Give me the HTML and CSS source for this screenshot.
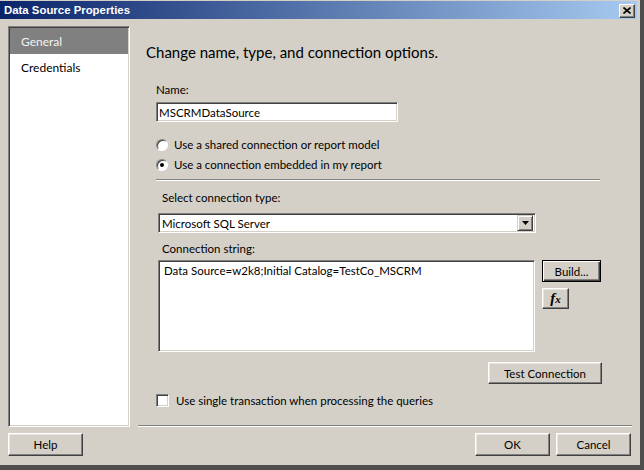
FILE: index.html
```html
<!DOCTYPE html>
<html lang="en">
<head>
  <meta charset="UTF-8" />
  <meta name="viewport" content="width=device-width, initial-scale=1.0"/>
  <title>Data Source Properties</title>
  <link rel="stylesheet" href="styles.css">
</head>
<body>

  <div class="ventana">
    <div class="titulo">
      <span>Data Source Properties</span>
      <span class="cerrar">
        <svg width="8" height="7" viewBox="0 0 8 7"><path d="M0.5 0.5 L7.5 6.5 M7.5 0.5 L0.5 6.5" stroke="#000" stroke-width="1.6"/></svg>
      </span>
    </div>

    <div class="cuerpo">
      <!-- Menu lateral -->
      <ul class="menu">
        <li class="activo">General</li>
        <li>Credentials</li>
      </ul>

      <!-- Panel principal -->
      <section class="panel">
        <h1>Change name, type, and connection options.</h1>
        <div class="form">
          <div class="etiqueta">Name:</div>
          <input class="hundido nombre" type="text" value="MSCRMDataSource">

          <div class="opciones">
            <div class="opcion"><span class="radio"></span>Use a shared connection or report model</div>
            <div class="opcion"><span class="radio marcado"></span>Use a connection embedded in my report</div>
          </div>
          <div class="linea"></div>

          <div class="conexion">
            <div class="etiqueta sel">Select connection type:</div>
            <div class="hundido combo">
              <span>Microsoft SQL Server</span>
              <span class="flecha">
                <svg width="7" height="4" viewBox="0 0 7 4"><path d="M0 0h7l-3.5 4z" fill="#000"/></svg>
              </span>
            </div>
            <div class="etiqueta con">Connection string:</div>
            <div class="fila">
              <textarea class="hundido cadena">Data Source=w2k8;Initial Catalog=TestCo_MSCRM</textarea>
              <div class="botones">
                <button class="boton defecto">Build...</button>
                <button class="boton fx"><i>f<small>x</small></i></button>
              </div>
            </div>
          </div>

          <button class="boton probar">Test Connection</button>
          <div class="check"><span class="caja"></span>Use single transaction when processing the queries</div>
        </div>
      </section>
    </div>

    <div class="pie">
      <button class="boton">Help</button>
      <span class="espacio"></span>
      <button class="boton">OK</button>
      <button class="boton">Cancel</button>
    </div>
  </div>

</body>
</html>
```

FILE: styles.css
```css
/* --------- Base --------- */
body { margin:0; background:#fff; font-family: Lato, "Liberation Sans", sans-serif; font-size:11.5px; color:#000 }
.ventana {
  width:640px; height:465px; background:#d4d0c8;
  border-right:4px solid #4e4e4e; border-bottom:5px solid #4e4e4e;
  display:flex; flex-direction:column
}

/* --------- Barra de titulo --------- */
.titulo {
  margin:1px 3px 0 0; height:18px; padding-left:4px;
  background:linear-gradient(to right, #0a246a, #a6caf0);
  color:#fff; font:bold 11.4px "Liberation Sans", sans-serif;
  display:flex; align-items:center; justify-content:space-between
}
.cerrar {
  width:16px; height:14px; box-sizing:border-box; margin:1px 2px 0 0;
  background:#d4d0c8; border:1px solid; border-color:#fff #404040 #404040 #fff;
  box-shadow:inset -1px -1px 0 #808080;
  display:flex; align-items:center; justify-content:center
}

/* --------- Bordes clasicos --------- */
.hundido {
  box-sizing:border-box; background:#fff;
  border:1px solid; border-color:#808080 #fff #fff #808080;
  box-shadow:inset 1px 1px 0 #404040, inset -1px -1px 0 #d4d0c8
}
.boton {
  box-sizing:border-box; height:23px; width:75px; padding:0;
  background:#d4d0c8; font:11.5px Lato, "Liberation Sans", sans-serif; color:#000;
  border:1px solid; border-color:#fff #404040 #404040 #fff;
  box-shadow:inset -1px -1px 0 #808080, inset 1px 1px 0 #e8e6e0
}
.boton.defecto {
  border-color:#000;
  box-shadow:inset 1px 1px 0 #fff, inset -1px -1px 0 #404040, inset -2px -2px 0 #808080
}

/* --------- Cuerpo --------- */
.cuerpo { display:flex; gap:8px; margin-top:7px; padding:0 8px; height:401px }
.menu {
  list-style:none; margin:0; padding:0; width:122px; height:401px; box-sizing:border-box;
  background:#fff; border:1px solid; border-color:#808080 #fff #fff #808080;
  box-shadow:inset 1px 1px 0 #404040, inset -1px -1px 0 #d4d0c8; padding:1px
}
.menu li { padding:0 0 0 11px; line-height:15px; margin-top:6px; font-size:12px }
.menu li.activo { background:#808080; color:#f4f4f4; margin-top:0; padding:6px 0 5px 11px }

.panel {
  width:494px; height:400px; box-sizing:border-box; padding-left:8px;
  border-bottom:1px solid #808080; box-shadow:0 1px 0 #fff
}
.panel h1 { font-size:15px; font-weight:normal; line-height:20px; margin:16px 0 0 }
.form { margin-left:10px; width:446px; display:flex; flex-direction:column }
.etiqueta { line-height:15px; margin-top:20px }
.nombre { margin-top:5px; width:242px; height:20px; padding:0 2px; font:11.5px Lato, "Liberation Sans", sans-serif; outline:none }

.opciones { display:flex; flex-direction:column; gap:5px; margin-top:15px }
.opcion { display:flex; align-items:center; gap:6px; line-height:15px }
.radio {
  width:12px; height:12px; box-sizing:border-box; border-radius:50%; background:#fff;
  border:1px solid; border-color:#808080 #fff #fff #808080;
  box-shadow:inset 1px 1px 0 #404040; display:flex; align-items:center; justify-content:center
}
.radio.marcado::after { content:""; width:4px; height:4px; border-radius:50%; background:#000 }
.linea { margin-top:7px; width:444px; border-top:1px solid #808080; border-bottom:1px solid #fff }

.conexion { margin-left:2px }
.etiqueta.sel { margin:9px 0 0 4px }
.etiqueta.con { margin:8px 0 0 4px }
.combo {
  margin-top:8px; width:378px; height:20px; padding:2px 2px 2px 3px;
  display:flex; align-items:center; justify-content:space-between
}
.flecha {
  width:16px; height:16px; box-sizing:border-box; background:#d4d0c8;
  border:1px solid; border-color:#d4d0c8 #404040 #404040 #d4d0c8;
  box-shadow:inset 1px 1px 0 #fff, inset -1px -1px 0 #808080;
  display:flex; align-items:center; justify-content:center
}
.fila { display:flex; gap:7px; margin-top:4px }
.cadena {
  width:377px; height:92px; resize:none; padding:2px 5px 0; margin:0;
  font:11.5px/15px Lato, "Liberation Sans", sans-serif; outline:none
}
.botones { display:flex; flex-direction:column; gap:6px }
.botones .defecto { width:59px; height:22px }
.fx { width:27px; height:21px; font:bold 15px "Liberation Serif", serif }
.fx small { font-size:11px }

.probar { width:114px; height:22px; margin:10px 0 0 auto }
.check { display:flex; align-items:center; gap:7px; margin-top:9px; line-height:15px }
.caja {
  width:13px; height:13px; box-sizing:border-box; background:#fff;
  border:1px solid; border-color:#808080 #fff #fff #808080;
  box-shadow:inset 1px 1px 0 #404040, inset -1px -1px 0 #d4d0c8
}

/* --------- Pie --------- */
.pie { display:flex; gap:6px; padding:6px 9px 0 8px }
.espacio { flex:1 }
```
